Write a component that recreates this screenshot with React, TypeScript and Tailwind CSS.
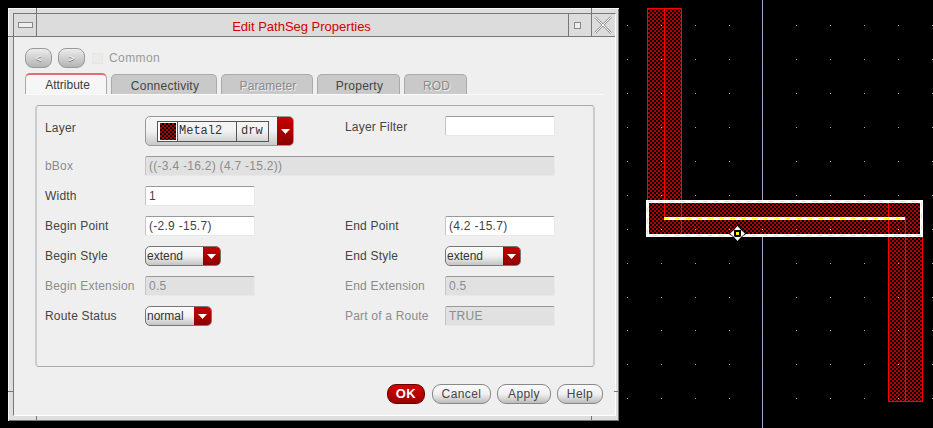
import React from "react";

const sans = "font-['Liberation_Sans',Arial,sans-serif]";

function Stipple({ id }: { id: string }) {
  return (
    <pattern id={id} width="4" height="4" patternUnits="userSpaceOnUse">
      <rect width="4" height="4" fill="#000" />
      <circle cx="1" cy="1" r="0.95" fill="#f00" />
      <circle cx="3" cy="3" r="0.95" fill="#f00" />
    </pattern>
  );
}

function NavButton({ label }: { label: string }) {
  return (
    <div className="flex h-[20px] w-[27px] items-center justify-center rounded-[8px] border border-[#999] bg-gradient-to-b from-[#ececec] to-[#b4b4b4] text-[11px] text-[#f4f4f4] [text-shadow:0_1px_0_#777]">
      {label}
    </div>
  );
}

function Tab({ label, w, state }: { label: string; w: string; state: "active" | "normal" | "disabled" }) {
  if (state === "active") {
    return (
      <div className={`flex h-[21px] ${w} items-center justify-center rounded-t-[5px] border-x border-[#aaa] border-t-2 border-t-[#e07070] bg-[#f6f6f6] pl-[3px] text-[12px] text-[#3c3c3c]`}>
        {label}
      </div>
    );
  }
  return (
    <div
      className={`flex h-[20px] ${w} items-center justify-center rounded-t-[5px] border-x border-t border-[#aaa] bg-[#c9c9c9] pl-[2px] pt-[2px] text-[12px] ${
        state === "disabled" ? "tracking-[0.1px] text-[#8a8a8a] [text-shadow:1px_1px_0_#eee]" : "tracking-[0.25px] text-[#444]"
      }`}
    >
      {label}
    </div>
  );
}

function Label({ children, disabled }: { children: React.ReactNode; disabled?: boolean }) {
  return (
    <div className={`w-[100px] shrink-0 text-[12px] tracking-[0.2px] ${disabled ? "text-[#8c8c8c]" : "text-[#444]"}`}>
      {children}
    </div>
  );
}

function Input({ value, w = "w-[110px]", disabled }: { value?: string; w?: string; disabled?: boolean }) {
  return (
    <div
      className={`flex h-[20px] ${w} items-center rounded-[2px] border border-b-[#e8e8e8] border-l-[#c4c4c4] border-r-[#e8e8e8] border-t-[#999] pl-[3px] text-[12px] tracking-[0.28px] ${
        disabled ? "bg-[#e1e1e1] text-[#8c8c8c]" : "bg-white text-[#444]"
      }`}
    >
      {value}
    </div>
  );
}

function Arrow() {
  return (
    <svg width="9" height="5" viewBox="0 0 9 5" className="block">
      <path d="M0 0H9L4.5 5Z" fill="#fff" />
    </svg>
  );
}

function Combo({ value, w, redW = "w-[17px]" }: { value: string; w: string; redW?: string }) {
  return (
    <div className={`flex h-[20px] ${w} items-stretch overflow-hidden rounded-[5px] border border-[#777] bg-gradient-to-b from-[#fbfbfb] via-[#f2f2f2] to-[#c4c4c4]`}>
      <div className="flex flex-1 items-center pl-[1px] text-[12px] text-[#333]">{value}</div>
      <div className={`flex ${redW} items-center justify-center bg-gradient-to-b from-[#c80000] to-[#8c0000]`}>
        <Arrow />
      </div>
    </div>
  );
}

function PillButton({ label, w }: { label: string; w: string }) {
  return (
    <div className={`flex h-[20px] ${w} items-center justify-center rounded-[9px] border border-[#888] bg-gradient-to-b from-[#fafafa] via-[#f0f0f0] to-[#bcbcbc] text-[12px] tracking-[0.4px] text-[#444]`}>
      {label}
    </div>
  );
}

function Row({ children, className = "" }: { children: React.ReactNode; className?: string }) {
  return <div className={`flex h-[20px] items-center ${className}`}>{children}</div>;
}

function Half({ children }: { children: React.ReactNode }) {
  return <div className="flex w-[300px] shrink-0 items-center">{children}</div>;
}

const dotXs = [627, 661, 695, 729, 762, 796, 830, 864, 898, 932];
const dotYs = [25, 59, 93, 127, 161, 195, 229, 263, 297, 330, 364, 398];

function Canvas() {
  return (
    <svg width="314" height="428" viewBox="619 0 314 428" className="block shrink-0">
      <defs>
        <Stipple id="st" />
      </defs>
      <rect x="762" y="0" width="1" height="428" fill="#a3a3c4" />
      <g fill="url(#st)">
        <rect x="647.5" y="8.5" width="34" height="195" />
        <rect x="888.5" y="234" width="34" height="167.5" />
        <rect x="648" y="202" width="274" height="33" />
      </g>
      <g fill="none" stroke="#f00" strokeWidth="1">
        <path d="M647.5 202V8.5H681.5V235" />
        <path d="M664.5 8.5V218" />
        <path d="M888.5 202V401.5H922.5V234" />
        <path d="M905.5 218V401.5" />
      </g>
      <rect x="647.5" y="201.5" width="274" height="34" fill="none" stroke="#fff" strokeWidth="3" />
      <rect x="647.5" y="201.5" width="274" height="34" fill="none" stroke="#ffff00" strokeWidth="1" strokeDasharray="5 6" />
      <path d="M664 218.5H905" stroke="#fff" strokeWidth="3" />
      <path d="M664 218.5H905" stroke="#ffff00" strokeWidth="1" strokeDasharray="5 6" />
      <g fill="#a8a8a8">
        {dotYs.flatMap((y) =>
          dotXs.map((x) => <rect key={`${x}-${y}`} x={x} y={y} width="1" height="1" />)
        )}
      </g>
      <path d="M737.5 224.5L743 230.5H740V231H741V230L747 233.5L741 237V236H740V236.5H743L737.5 242.5L732 236.5H735V236H734V237L728 233.5L734 230V231H735V230.5H732Z" fill="#000" />
      <g fill="#fff">
        <path d="M737.5 226L741 230H734Z" />
        <path d="M737.5 241L741 237H734Z" />
        <path d="M730 233.5L734 230V237Z" />
        <path d="M745 233.5L741 230V237Z" />
      </g>
      <rect x="735" y="231" width="5" height="5" fill="#000" />
      <rect x="736" y="232" width="3" height="3" fill="#ffff00" />
    </svg>
  );
}

export default function App() {
  return (
    <div className={`flex h-[428px] w-[933px] overflow-hidden bg-black ${sans}`}>
      <div className="relative ml-2 mt-2 h-[413px] w-[611px] shrink-0 bg-[#dedede] pb-[5px] pl-[5px] pr-[3px] pt-[5px] shadow-[inset_1px_1px_0_#f6f6f6,inset_-1px_-1px_0_#777]">
        {/* window-frame corner ticks */}
        <div className="absolute left-[28px] top-0 h-[5px] w-px bg-[#777]" />
        <div className="absolute left-[583px] top-0 h-[5px] w-px bg-[#777]" />
        <div className="absolute left-0 top-[28px] h-px w-[5px] bg-[#777]" />
        <div className="absolute left-0 top-[383px] h-px w-[5px] bg-[#777]" />
        <div className="absolute right-0 top-[383px] h-px w-[5px] bg-[#777]" />
        <div className="absolute bottom-0 left-[28px] h-[5px] w-px bg-[#777]" />
        <div className="absolute bottom-0 left-[583px] h-[5px] w-px bg-[#777]" />

        <div className="flex h-full flex-col border-b border-l border-r border-t border-b-white border-l-[#777] border-r-white border-t-[#777]">
          {/* title bar */}
          <div className="flex h-[23px] shrink-0 items-stretch border-b border-[#777] bg-[#dcdcdc] pr-[1px]">
            <div className="flex w-[23px] items-center justify-center border-r border-[#777]">
              <div className="h-[6px] w-[15px] border border-[#888] bg-[#eee]" />
            </div>
            <div className="flex flex-1 items-center justify-center pr-[2px] pt-[3px] text-[13px] text-[#d40000]">
              Edit PathSeg Properties
            </div>
            <div className="flex w-[23px] items-center justify-center border-l border-[#777] pr-[5px]">
              <div className="h-[7px] w-[7px] border border-[#888] bg-[#eee]" />
            </div>
            <div className="flex w-[23px] items-center justify-center border-l border-[#777]">
              <svg width="18" height="18" viewBox="0 0 18 18">
                <path d="M1 1L17 17M17 1L1 17" stroke="#999" strokeWidth="2.4" />
                <path d="M1 1L17 17M17 1L1 17" stroke="#f6f6f6" strokeWidth="1" />
              </svg>
            </div>
          </div>

          {/* dialog body */}
          <div className="flex flex-1 flex-col bg-[#efefef] pl-[11px] pr-[11px] pt-[11px]">
            <div className="flex h-[20px] items-center">
              <NavButton label="<" />
              <div className="ml-[6px]"><NavButton label=">" /></div>
              <div className="ml-[7px] h-[11px] w-[11px] border border-[#e6e6e6] bg-[#ebebeb]" />
              <div className="ml-[6px] text-[12px] tracking-[0.4px] text-[#999]">Common</div>
            </div>

            <div className="mt-[6px] flex h-[21px] items-end gap-[4px] border-b border-[#fafafa]">
              <Tab label="Attribute" w="w-[82px]" state="active" />
              <Tab label="Connectivity" w="w-[106px]" state="normal" />
              <Tab label="Parameter" w="w-[92px]" state="disabled" />
              <Tab label="Property" w="w-[83px]" state="normal" />
              <Tab label="ROD" w="w-[63px]" state="disabled" />
            </div>

            <div className="ml-[10px] mt-[10px] flex h-[262px] w-[560px] flex-col rounded-[4px] border-x-2 border-y border-x-[#cccccc] border-y-[#aaaaaa] pl-[8px] pt-[10px]">
              <Row className="!h-[30px] !items-start">
                <Half>
                  <div className="self-start pt-[3px]"><Label>Layer</Label></div>
                  <div className="flex h-[30px] w-[149px] items-stretch overflow-hidden rounded-[5px] border border-[#999] bg-gradient-to-b from-[#f6f6f6] via-[#f2f2f2] to-[#c8c8c8]">
                    <div className="flex flex-1 items-center pl-[11px]">
                      <div className="flex h-[21px] w-[112px] items-stretch border border-[#555] text-[12px] text-[#333] font-['Liberation_Mono',monospace]">
                        <div className="flex w-[20px] items-center justify-center border-r border-[#555] bg-white">
                          <svg width="16" height="17" className="block">
                            <defs><Stipple id="sw" /></defs>
                            <rect width="16" height="17" fill="url(#sw)" />
                          </svg>
                        </div>
                        <div className="flex w-[59px] items-center border-r border-[#555] pl-[1px]">Metal2</div>
                        <div className="flex items-center pl-[4px]">drw</div>
                      </div>
                    </div>
                    <div className="flex w-[16px] items-center justify-center bg-gradient-to-b from-[#c80000] to-[#8c0000]">
                      <Arrow />
                    </div>
                  </div>
                </Half>
                <div className="pt-[2px]"><Label>Layer Filter</Label></div>
                <Input />
              </Row>

              <Row className="mt-[10px]">
                <Label disabled>bBox</Label>
                <Input disabled w="w-[410px]" value="((-3.4 -16.2) (4.7 -15.2))" />
              </Row>

              <Row className="mt-[10px]">
                <Label>Width</Label>
                <Input value="1" />
              </Row>

              <Row className="mt-[10px]">
                <Half>
                  <Label>Begin Point</Label>
                  <Input value="(-2.9 -15.7)" />
                </Half>
                <Label>End Point</Label>
                <Input value="(4.2 -15.7)" />
              </Row>

              <Row className="mt-[10px]">
                <Half>
                  <Label>Begin Style</Label>
                  <Combo value="extend" w="w-[76px]" />
                </Half>
                <Label>End Style</Label>
                <Combo value="extend" w="w-[76px]" />
              </Row>

              <Row className="mt-[10px]">
                <Half>
                  <Label disabled>Begin Extension</Label>
                  <Input disabled value="0.5" />
                </Half>
                <Label disabled>End Extension</Label>
                <Input disabled value="0.5" />
              </Row>

              <Row className="mt-[10px]">
                <Half>
                  <Label>Route Status</Label>
                  <Combo value="normal" w="w-[67px]" />
                </Half>
                <Label disabled>Part of a Route</Label>
                <Input disabled value="TRUE" />
              </Row>
            </div>

            <div className="mt-[17px] flex justify-end gap-[6px] pr-[1px]">
              <div className="mr-px flex h-[20px] w-[38px] items-center justify-center rounded-[9px] border border-[#600] bg-gradient-to-b from-[#d80000] to-[#980000] text-[13px] font-bold tracking-[0.4px] text-white">
                OK
              </div>
              <PillButton label="Cancel" w="w-[59px]" />
              <PillButton label="Apply" w="w-[54px]" />
              <PillButton label="Help" w="w-[46px]" />
            </div>
          </div>
        </div>
      </div>
      <Canvas />
    </div>
  );
}
